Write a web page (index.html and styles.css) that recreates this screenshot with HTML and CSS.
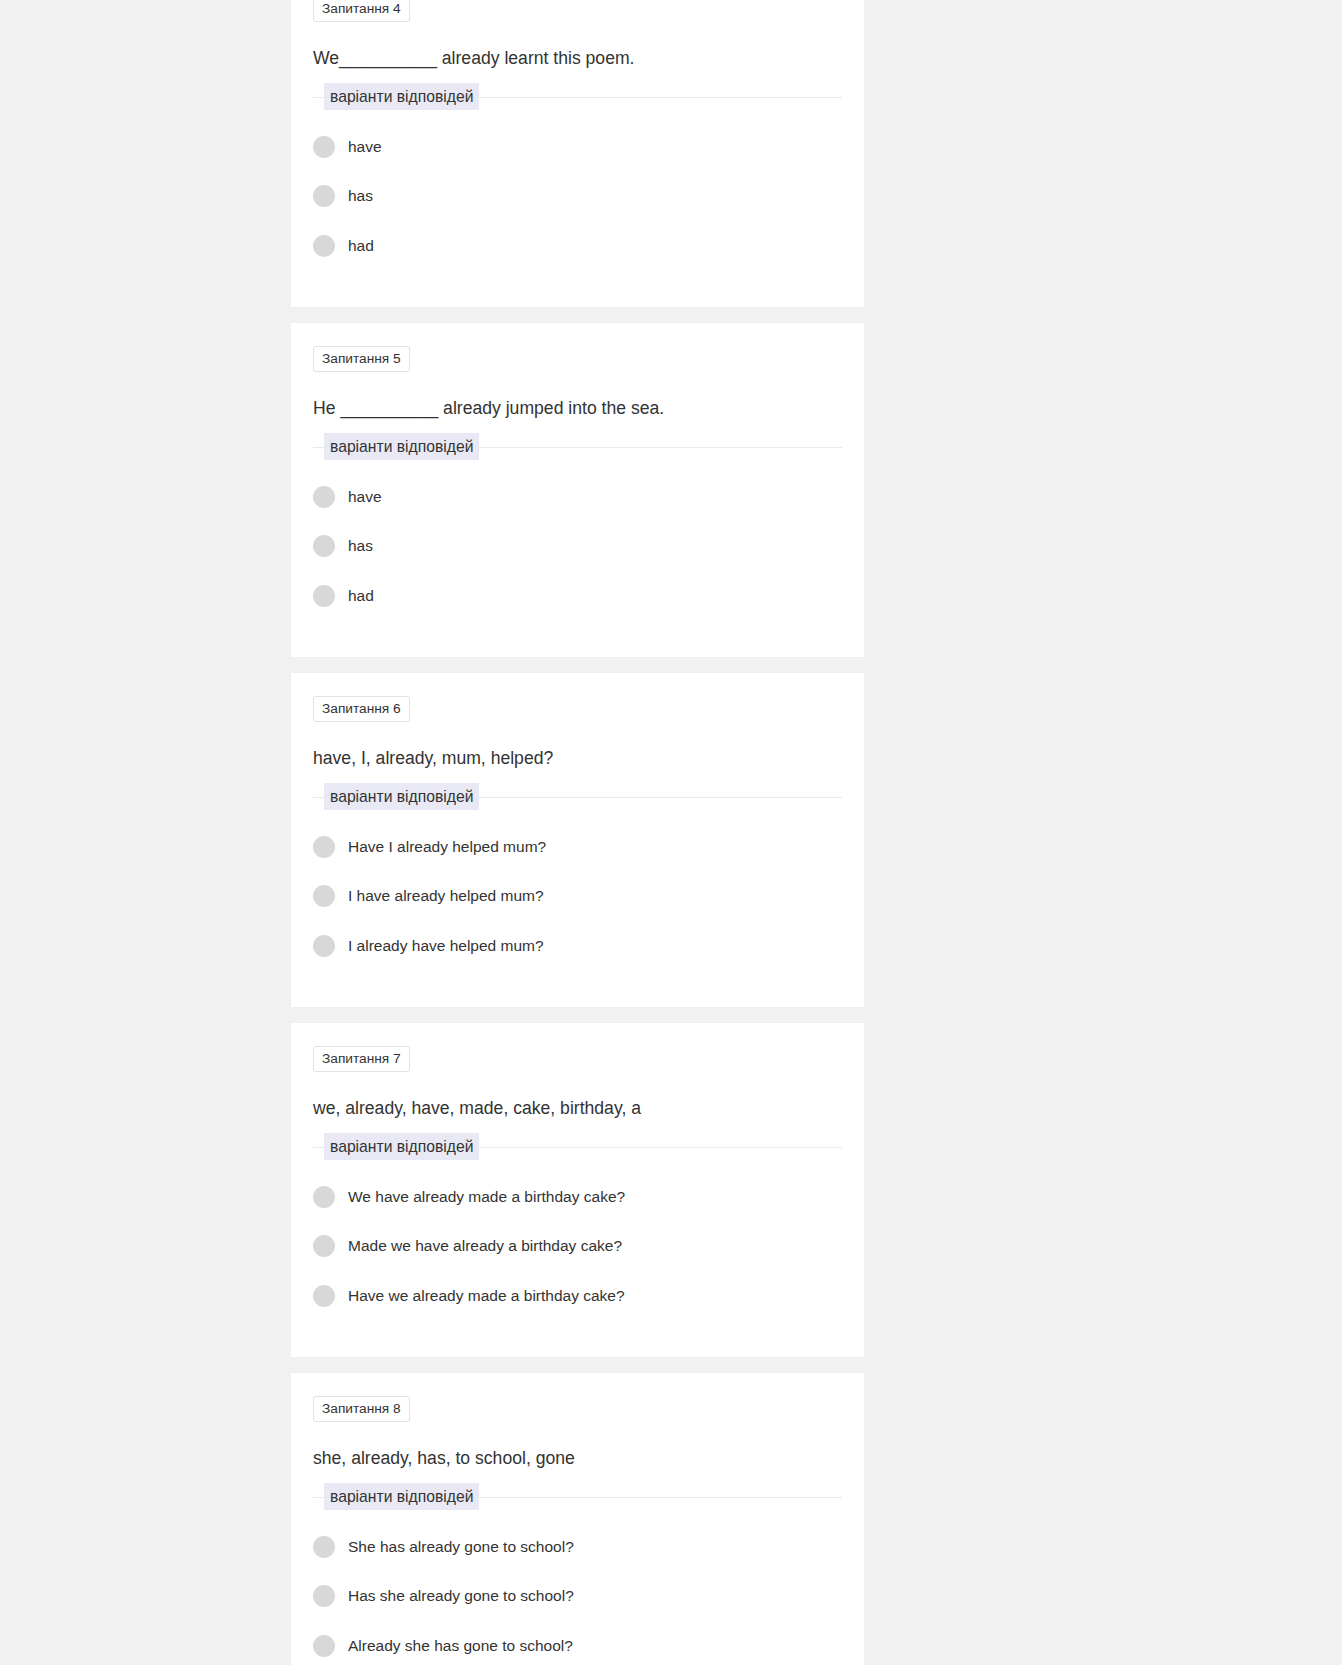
FILE: index.html
```html
<!DOCTYPE html>
<html lang="uk">
<head>
<meta charset="utf-8">
<title>Тест</title>
<link rel="stylesheet" href="styles.css">
</head>
<body>
<div class="layout">
  <main class="questions">
    <section class="card">
      <div class="badge">Запитання 4</div>
      <p class="question">We__________ already learnt this poem.</p>
      <div class="divider"><span class="divider-label">варіанти відповідей</span></div>
      <ul class="options">
        <li class="option"><span class="radio"></span><span>have</span></li>
        <li class="option"><span class="radio"></span><span>has</span></li>
        <li class="option"><span class="radio"></span><span>had</span></li>
      </ul>
    </section>
    <section class="card">
      <div class="badge">Запитання 5</div>
      <p class="question">He __________ already jumped into the sea.</p>
      <div class="divider"><span class="divider-label">варіанти відповідей</span></div>
      <ul class="options">
        <li class="option"><span class="radio"></span><span>have</span></li>
        <li class="option"><span class="radio"></span><span>has</span></li>
        <li class="option"><span class="radio"></span><span>had</span></li>
      </ul>
    </section>
    <section class="card">
      <div class="badge">Запитання 6</div>
      <p class="question">have, I, already, mum, helped?</p>
      <div class="divider"><span class="divider-label">варіанти відповідей</span></div>
      <ul class="options">
        <li class="option"><span class="radio"></span><span>Have I already helped mum?</span></li>
        <li class="option"><span class="radio"></span><span>I have already helped mum?</span></li>
        <li class="option"><span class="radio"></span><span>I already have helped mum?</span></li>
      </ul>
    </section>
    <section class="card">
      <div class="badge">Запитання 7</div>
      <p class="question">we, already, have, made, cake, birthday, a</p>
      <div class="divider"><span class="divider-label">варіанти відповідей</span></div>
      <ul class="options">
        <li class="option"><span class="radio"></span><span>We have already made a birthday cake?</span></li>
        <li class="option"><span class="radio"></span><span>Made we have already a birthday cake?</span></li>
        <li class="option"><span class="radio"></span><span>Have we already made a birthday cake?</span></li>
      </ul>
    </section>
    <section class="card">
      <div class="badge">Запитання 8</div>
      <p class="question">she, already, has, to school, gone</p>
      <div class="divider"><span class="divider-label">варіанти відповідей</span></div>
      <ul class="options">
        <li class="option"><span class="radio"></span><span>She has already gone to school?</span></li>
        <li class="option"><span class="radio"></span><span>Has she already gone to school?</span></li>
        <li class="option"><span class="radio"></span><span>Already she has gone to school?</span></li>
      </ul>
    </section>
  </main>
  <aside class="sidebar"></aside>
</div>
</body>
</html>
```

FILE: styles.css
```css
* { box-sizing: border-box; }
html, body { margin: 0; padding: 0; }
body {
  background: #f1f1f1;
  font-family: "Liberation Sans", Arial, Helvetica, sans-serif;
  color: #333;
}
.layout {
  width: 760px;
  margin: 0 auto;
  display: flex;
  gap: 16px;
}
.questions {
  width: 573px;
  flex: none;
  display: flex;
  flex-direction: column;
  gap: 16px;
  margin-top: -27px;
}
.sidebar { flex: 1; }
.card {
  background: #fff;
  height: 334px;
  padding: 23px 22px 36px;
  box-shadow: 0 0 1px rgba(0,0,0,0.06);
}
.badge {
  display: inline-block;
  font-size: 13.7px;
  line-height: 16px;
  padding: 4px 8px;
  border: 1px solid #e2e2e2;
  border-radius: 3px;
  color: #333;
}
.question {
  margin: 24px 0 0;
  font-size: 17.6px;
  line-height: 24px;
  color: #333;
}
.divider {
  margin-top: 13px;
  padding-left: 11px;
  background: linear-gradient(#e8e8ee, #e8e8ee) 0 14px / 100% 1px no-repeat;
}
.divider-label {
  display: inline-block;
  background: #e9e9f5;
  font-size: 15.7px;
  line-height: 19px;
  padding: 4px 6px;
  color: #333;
}
.options {
  list-style: none;
  margin: 12px 0 0;
  padding: 0;
}
.option {
  height: 49.6px;
  display: flex;
  align-items: center;
  gap: 13px;
  font-size: 15.5px;
  color: #333;
}
.radio {
  width: 22px;
  height: 22px;
  border-radius: 50%;
  background: #d8d8d8;
  flex: none;
}
```
